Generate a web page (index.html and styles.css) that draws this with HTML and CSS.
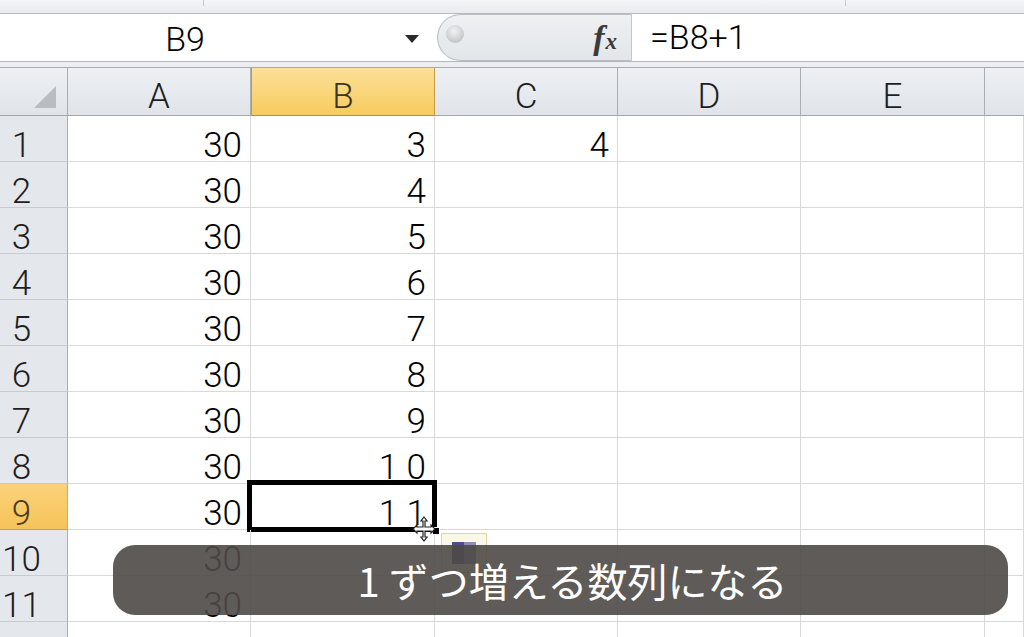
FILE: index.html
```html
<!DOCTYPE html>
<html lang="ja">
<head>
<meta charset="utf-8">
<title>Excel</title>
<link rel="stylesheet" href="styles.css">
</head>
<body>
<div class="app">
  <div class="ribbon-edge">
    <span class="sep sep1"></span>
    <span class="sep sep2"></span>
  </div>
  <div class="formula-bar">
    <div class="namebox">
      <span class="name">B9</span>
      <svg class="arrow" width="16" height="10" viewBox="0 0 16 10"><polygon points="1,1 15,1 8,9" fill="#2a2a2a"/></svg>
    </div>
    <div class="fx-area">
      <span class="grip"></span>
      <span class="fx"><i>f</i><i class="x">x</i></span>
    </div>
    <div class="formula">=B8+1</div>
  </div>
  <div class="gap"></div>
  <div class="sheet">
    <div class="hd corner"><svg width="24" height="24" viewBox="0 0 24 24"><polygon points="23,1 23,23 1,23" fill="#b9bdc2"/></svg></div>
    <div class="hd col">A</div>
    <div class="hd col sel">B</div>
    <div class="hd col">C</div>
    <div class="hd col">D</div>
    <div class="hd col">E</div>
    <div class="hd col last"></div>

    <div class="rh">1</div><div class="c">30</div><div class="c">3</div><div class="c">4</div><div class="c"></div><div class="c"></div><div class="c"></div>
    <div class="rh">2</div><div class="c">30</div><div class="c">4</div><div class="c"></div><div class="c"></div><div class="c"></div><div class="c"></div>
    <div class="rh">3</div><div class="c">30</div><div class="c">5</div><div class="c"></div><div class="c"></div><div class="c"></div><div class="c"></div>
    <div class="rh">4</div><div class="c">30</div><div class="c">6</div><div class="c"></div><div class="c"></div><div class="c"></div><div class="c"></div>
    <div class="rh">5</div><div class="c">30</div><div class="c">7</div><div class="c"></div><div class="c"></div><div class="c"></div><div class="c"></div>
    <div class="rh">6</div><div class="c">30</div><div class="c">8</div><div class="c"></div><div class="c"></div><div class="c"></div><div class="c"></div>
    <div class="rh">7</div><div class="c">30</div><div class="c">9</div><div class="c"></div><div class="c"></div><div class="c"></div><div class="c"></div>
    <div class="rh">8</div><div class="c">30</div><div class="c">1 0</div><div class="c"></div><div class="c"></div><div class="c"></div><div class="c"></div>
    <div class="rh sel">9</div><div class="c">30</div><div class="c active">1 1<span class="handle"></span><svg class="cursor" width="28" height="28" viewBox="0 0 28 28"><path d="M14 2 L17 6 L15 6 L15 12 L21 12 L21 10 L25 14 L21 18 L21 16 L15 16 L15 22 L17 22 L14 26 L11 22 L13 22 L13 16 L7 16 L7 18 L3 14 L7 10 L7 12 L13 12 L13 6 L11 6 Z" fill="#fff" stroke="#222" stroke-width="1.2"/></svg></div><div class="c"></div><div class="c"></div><div class="c"></div><div class="c"></div>
    <div class="rh">10</div><div class="c">30</div><div class="c"></div><div class="c"><span class="autofill"><span class="af-icon"></span></span></div><div class="c"></div><div class="c"></div><div class="c"></div>
    <div class="rh">11</div><div class="c">30</div><div class="c"></div><div class="c"></div><div class="c"></div><div class="c"></div><div class="c"></div>
    <div class="rh">12</div><div class="c">30</div><div class="c"></div><div class="c"></div><div class="c"></div><div class="c"></div><div class="c"></div>
  </div>
  <div class="caption">1 ずつ増える数列になる</div>
</div>
</body>
</html>
```

FILE: styles.css
```css
* { box-sizing: border-box; }
html, body {
  margin: 0;
  padding: 0;
  width: 1024px;
  height: 637px;
  overflow: hidden;
  background: #fff;
}
.app {
  position: relative;
  width: 1024px;
  height: 637px;
  overflow: hidden;
  font-family: Roboto, "Liberation Sans", "Noto Sans CJK JP", sans-serif;
  font-weight: 300;
  color: #000;
}
.ribbon-edge {
  position: relative;
  height: 14px;
  background: linear-gradient(#f4f5f7, #e9ebee);
  border-bottom: 1px solid #b6bbc1;
}
.sep {
  position: absolute;
  top: 0;
  width: 1px;
  height: 6px;
  background: #c5c9ce;
}
.sep1 { left: 203px; }
.sep2 { left: 845px; }
.formula-bar {
  display: flex;
  height: 48px;
  border-bottom: 1px solid #b3b8be;
  background: #fff;
}
.namebox {
  width: 437px;
  display: flex;
  align-items: center;
  background: #fff;
}
.name {
  width: 370px;
  text-align: center;
  font-size: 34px;
  line-height: 40px;
  padding-top: 2px;
}
.arrow {
  margin-left: 34px;
  margin-top: 2px;
}
.fx-area {
  width: 195px;
  display: flex;
  align-items: center;
  justify-content: space-between;
  background: linear-gradient(#eef0f2, #e3e6e9);
  border: 1px solid #b9bec3;
  border-right-color: #c3c7cb;
  border-radius: 24px 0 0 24px;
  padding: 0 14px 0 8px;
}
.grip {
  width: 18px;
  height: 18px;
  border-radius: 50%;
  background: radial-gradient(circle at 45% 35%, #f2f2f2 0, #cfd1d3 55%, #aeb1b4 100%);
  margin-top: -8px;
}
.fx {
  font-family: "Liberation Serif", "DejaVu Serif", serif;
  font-weight: 700;
  font-style: italic;
  color: #3a3a3a;
  font-size: 34px;
  line-height: 1;
  padding-top: 0;
}
.fx i { font-style: italic; }
.fx .x { font-size: 23px; margin-left: 1px; }
.formula {
  flex: 1;
  font-size: 34px;
  line-height: 40px;
  padding: 3px 0 0 18px;
  background: #fff;
}
.gap {
  height: 6px;
  background: #eceef1;
  border-bottom: 1px solid #a6abb1;
}
.sheet {
  display: grid;
  grid-template-columns: 68px 183px 184px 183px 183px 184px 39px;
  grid-auto-rows: 46px;
  grid-template-rows: 48px;
  font-size: 35px;
}
.hd {
  background: linear-gradient(#eef0f3, #e0e4e9);
  border-right: 1px solid #a9aeb4;
  border-bottom: 1px solid #a0a6ad;
  text-align: center;
  line-height: 40px;
  padding-top: 9px;
  color: #1e1e1e;
}
.hd.corner {
  display: flex;
  justify-content: flex-end;
  align-items: flex-end;
  padding: 0 10px 6px 0;
  border-right-color: #a9aeb4;
}
.hd.sel {
  background: linear-gradient(#fce09a, #f7cb5e);
  border-left: 1px solid #c39b45;
  border-right: 1px solid #c39b45;
  border-bottom: 1px solid #b58c39;
  color: #3c3320;
}
.hd.last { border-right: none; }
.rh {
  background: #e4e7ec;
  border-right: 1px solid #a9aeb4;
  border-bottom: 1px solid #c8ccd1;
  padding: 12px 24px 0 0;
  line-height: 35px;
  text-align: center;
  color: #1e1e1e;
}
.rh.sel {
  background: linear-gradient(#fbd27b, #f5c35a);
  border-bottom-color: #c99f47;
  color: #4a3d1c;
}
.c {
  position: relative;
  border-right: 1px solid #d8d9db;
  border-bottom: 1px solid #d8d9db;
  text-align: right;
  padding: 12px 8px 0 0;
  line-height: 35px;
  white-space: pre;
}
.c.active::after {
  content: "";
  position: absolute;
  left: -4px;
  top: -4px;
  right: -3px;
  bottom: -3px;
  border: 5px solid #000;
  pointer-events: none;
}
.handle {
  position: absolute;
  right: -6px;
  bottom: -6px;
  width: 8px;
  height: 8px;
  background: #000;
  border: 1px solid #fff;
  z-index: 2;
}
.cursor {
  position: absolute;
  right: -4px;
  bottom: -14px;
  z-index: 3;
}
.autofill {
  position: absolute;
  left: 6px;
  top: 3px;
  width: 46px;
  height: 40px;
  border: 1px solid #e6d49a;
  background: #fbf7e8;
  z-index: 1;
}
.af-icon {
  position: absolute;
  left: 10px;
  top: 8px;
  width: 24px;
  height: 22px;
  background: linear-gradient(90deg, #4b4e8a 50%, #8a8cbc 50%);
}
.caption {
  position: absolute;
  left: 113px;
  top: 545px;
  width: 895px;
  height: 70px;
  border-radius: 22px;
  background: rgba(78, 73, 70, 0.9);
  color: #fff;
  font-family: "Noto Sans CJK JP", "Noto Sans", sans-serif;
  font-weight: 400;
  font-size: 40px;
  line-height: 70px;
  text-align: center;
  padding-left: 24px;
  z-index: 5;
}
```
